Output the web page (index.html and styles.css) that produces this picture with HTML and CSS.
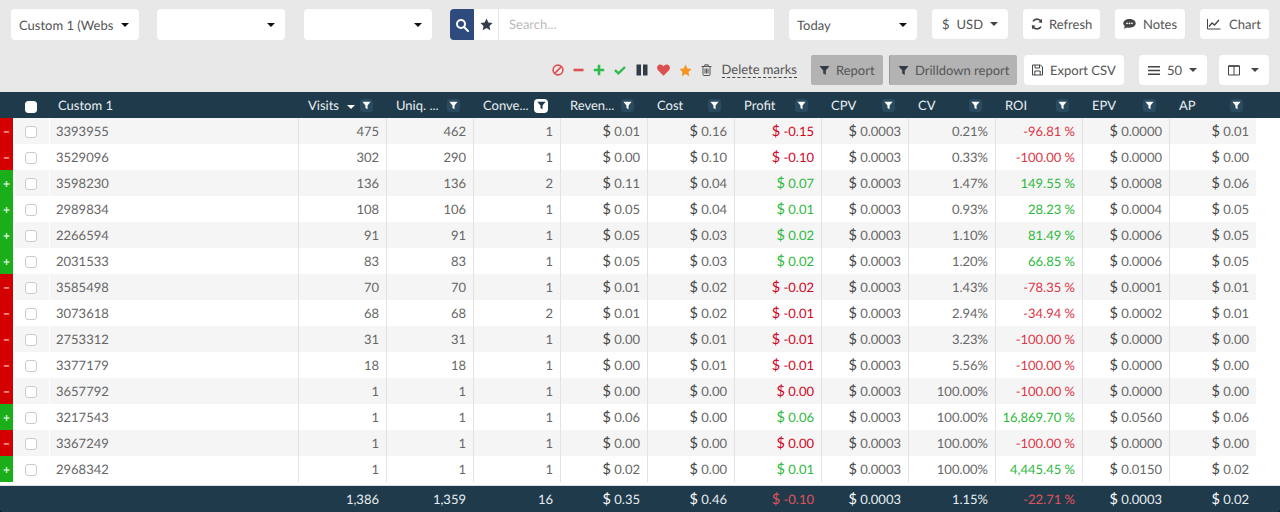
FILE: index.html
```html
<!DOCTYPE html>
<html lang="en">
<head>
  <meta charset="UTF-8">
  <title>Report</title>
  <link rel="stylesheet" href="styles.css">
</head>
<body>

<svg class="defs" width="0" height="0">
  <symbol id="funnel" viewBox="0 0 12 12"><path d="M.5 1h11L7.4 6v5L4.6 9.4V6z"/></symbol>
</svg>

<div class="toolbar">
  <div class="bar-row">
    <div class="select sel-first"><span class="sel-text">Custom 1 (Webs</span><i class="caret"></i></div>
    <div class="select sel-second"><i class="caret"></i></div>
    <div class="select sel-third"><i class="caret"></i></div>
    <div class="search">
      <div class="search-btn">
        <svg width="14" height="14" viewBox="0 0 14 14" fill="none" stroke="#fff" stroke-width="2"><circle cx="6" cy="6" r="4"/><path d="M9 9l4 4" stroke-linecap="round"/></svg>
      </div>
      <div class="search-star">
        <svg width="13" height="13" viewBox="0 0 24 24" fill="#333d47"><path d="M12 1l3.4 7.2 7.8 1-5.7 5.4 1.5 7.8L12 18.6l-7 3.8 1.5-7.8L.8 9.2l7.8-1z"/></svg>
      </div>
      <div class="search-input">Search...</div>
    </div>
    <div class="select sel-date"><span>Today</span><i class="caret"></i></div>
    <div class="btn btn-usd"><span class="dollar">$</span><span>USD</span><i class="caret caret-small"></i></div>
    <div class="btn btn-refresh">
      <svg width="12" height="12" viewBox="0 0 12 12" fill="none" stroke="#444" stroke-width="1.7"><path d="M10.6 4.6A4.8 4.8 0 0 0 2 3.4M1.4 7.4A4.8 4.8 0 0 0 10 8.6"/><path d="M11 .8v3.6H7.4M1 11.2V7.6h3.6" fill="#444" stroke="none"/></svg>
      Refresh
    </div>
    <div class="btn btn-notes">
      <svg width="13" height="12" viewBox="0 0 13 12"><path d="M6.5 1C3 1 .3 2.9.3 5.3c0 1.100.6 2.100 1.500 2.800L1 10.800l3-1.400c.8.200 1.600.3 2.500.3 3.500 0 6.200-1.900 6.200-4.400S10 1 6.500 1z" fill="#444"/><circle cx="4" cy="5.3" r=".9" fill="#fff"/><circle cx="6.5" cy="5.3" r=".9" fill="#fff"/><circle cx="9" cy="5.3" r=".9" fill="#fff"/></svg>
      Notes
    </div>
    <div class="btn btn-chart">
      <svg width="14" height="12" viewBox="0 0 14 12" fill="none" stroke="#444"><path d="M.5 1v10h13"/><path d="M2 8.500l3-3.500 2.500 2L12 2" stroke-width="1.3"/></svg>
      Chart
    </div>
  </div>

  <div class="bar-row bar-row-second">
    <div class="marks">
      <svg width="12" height="12" viewBox="0 0 12 12" fill="none" stroke="#dc5050" stroke-width="1.6"><circle cx="6" cy="6" r="4.9"/><path d="M2.600 9.400l6.800-6.800"/></svg>
      <svg width="11" height="12" viewBox="0 0 11 12"><path d="M.5 4.700h10v2.600H.5z" fill="#dc5050"/></svg>
      <svg width="12" height="12" viewBox="0 0 12 12"><path d="M4.700.8h2.600v3.900h3.900v2.600H7.300v3.900H4.700V7.300H.8V4.700h3.900z" fill="#2dbb4e"/></svg>
      <svg width="12" height="12" viewBox="0 0 12 12" fill="none" stroke="#2dbb4e" stroke-width="2.4"><path d="M1 6.200l3.400 3.200L11 3"/></svg>
      <svg class="mark-pause" width="12" height="12" viewBox="0 0 12 12"><path d="M.5.500h4.500v11H.5zM7 .500h4.500v11H7z" fill="#333d47"/></svg>
      <svg width="13" height="12" viewBox="0 0 13 12"><path d="M6.500 11.800L1 6.300C-.6 4.500 0 1.600 2 .8c1.700-.7 3.500 0 4.500 1.600C7.500.8 9.300.1 11 .8c2 .8 2.600 3.700 1 5.500z" fill="#dc5050"/></svg>
      <svg width="13" height="13" viewBox="0 0 24 24"><path d="M12 1l3.400 7.200 7.800 1-5.700 5.400 1.500 7.800L12 18.600l-7 3.800 1.500-7.800L.8 9.200l7.800-1z" fill="#f7931e"/></svg>
      <svg width="11" height="12" viewBox="0 0 11 12" fill="none" stroke="#555" stroke-width="1"><path d="M.5 2.500h10M2 2.500v8.200c0 .5.300.8.800.8h5.400c.5 0 .8-.3.800-.8V2.500M3.800 2.500V.8h3.400v1.700M4 4.500v5M5.500 4.500v5M7 4.500v5"/></svg>
      <span class="delete-marks">Delete marks</span>
    </div>
    <div class="btn btn-gray btn-report">
      <svg class="funnel-dark" width="11" height="11"><use href="#funnel"/></svg> Report
    </div>
    <div class="btn btn-gray btn-drill">
      <svg class="funnel-dark" width="11" height="11"><use href="#funnel"/></svg> Drilldown report
    </div>
    <div class="btn btn-export">
      <svg width="11" height="12" viewBox="0 0 11 12" fill="none" stroke="#444"><path d="M.5 1h8L10.500 3v8H.5zM3 1v3h4.500V1M2.800 11V7h5.400v4"/></svg>
      Export CSV
    </div>
    <div class="btn btn-count">
      <svg width="12" height="11" viewBox="0 0 12 11" fill="#444"><path d="M0 1h12v1.500H0zM0 4.700h12v1.500H0zM0 8.500h12V10H0z"/></svg>
      <span>50</span><i class="caret caret-small"></i>
    </div>
    <div class="btn btn-cols">
      <svg width="12" height="11" viewBox="0 0 12 11" fill="none" stroke="#444"><path d="M.5 1h11v9H.5zM6 1v9"/><path d="M.5 1h11" stroke-width="1.5"/></svg>
      <i class="caret caret-small"></i>
    </div>
  </div>
</div>

<table class="report">
  <colgroup>
    <col class="c-mark"><col class="c-check"><col class="c-name">
    <col class="c-first"><col class="c-num"><col class="c-num"><col class="c-num"><col class="c-num"><col class="c-num">
    <col class="c-num"><col class="c-num"><col class="c-num"><col class="c-num"><col class="c-num">
    <col class="c-rest">
  </colgroup>
  <thead>
    <tr>
      <th></th>
      <th class="th-check"><span class="check check-head"></span></th>
      <th class="th-name">Custom 1</th>
      <th><div class="th-in"><span>Visits</span><i class="sort"></i><span class="filter"><svg width="9" height="9"><use href="#funnel"/></svg></span></div></th>
      <th><div class="th-in"><span>Uniq. ...</span><span class="filter"><svg width="9" height="9"><use href="#funnel"/></svg></span></div></th>
      <th><div class="th-in"><span>Conve...</span><span class="filter filter-on"><svg width="9" height="9"><use href="#funnel"/></svg></span></div></th>
      <th><div class="th-in"><span>Reven...</span><span class="filter"><svg width="9" height="9"><use href="#funnel"/></svg></span></div></th>
      <th><div class="th-in"><span>Cost</span><span class="filter"><svg width="9" height="9"><use href="#funnel"/></svg></span></div></th>
      <th><div class="th-in"><span>Profit</span><span class="filter"><svg width="9" height="9"><use href="#funnel"/></svg></span></div></th>
      <th><div class="th-in"><span>CPV</span><span class="filter"><svg width="9" height="9"><use href="#funnel"/></svg></span></div></th>
      <th><div class="th-in"><span>CV</span><span class="filter"><svg width="9" height="9"><use href="#funnel"/></svg></span></div></th>
      <th><div class="th-in"><span>ROI</span><span class="filter"><svg width="9" height="9"><use href="#funnel"/></svg></span></div></th>
      <th><div class="th-in"><span>EPV</span><span class="filter"><svg width="9" height="9"><use href="#funnel"/></svg></span></div></th>
      <th><div class="th-in"><span>AP</span><span class="filter"><svg width="9" height="9"><use href="#funnel"/></svg></span></div></th>
      <th></th>
    </tr>
  </thead>
  <tbody>
    <tr><td class="mark minus">−</td><td class="cb"><span class="check"></span></td><td class="name">3393955</td><td>475</td><td>462</td><td>1</td><td><b>$</b> 0.01</td><td><b>$</b> 0.16</td><td class="loss"><b>$</b> -0.15</td><td><b>$</b> 0.0003</td><td>0.21%</td><td class="roi-bad">-96.81 %</td><td><b>$</b> 0.0000</td><td><b>$</b> 0.01</td><td class="rest"></td></tr>
    <tr><td class="mark minus">−</td><td class="cb"><span class="check"></span></td><td class="name">3529096</td><td>302</td><td>290</td><td>1</td><td><b>$</b> 0.00</td><td><b>$</b> 0.10</td><td class="loss"><b>$</b> -0.10</td><td><b>$</b> 0.0003</td><td>0.33%</td><td class="roi-bad">-100.00 %</td><td><b>$</b> 0.0000</td><td><b>$</b> 0.00</td><td class="rest"></td></tr>
    <tr><td class="mark plus">+</td><td class="cb"><span class="check"></span></td><td class="name">3598230</td><td>136</td><td>136</td><td>2</td><td><b>$</b> 0.11</td><td><b>$</b> 0.04</td><td class="gain"><b>$</b> 0.07</td><td><b>$</b> 0.0003</td><td>1.47%</td><td class="roi-good">149.55 %</td><td><b>$</b> 0.0008</td><td><b>$</b> 0.06</td><td class="rest"></td></tr>
    <tr><td class="mark plus">+</td><td class="cb"><span class="check"></span></td><td class="name">2989834</td><td>108</td><td>106</td><td>1</td><td><b>$</b> 0.05</td><td><b>$</b> 0.04</td><td class="gain"><b>$</b> 0.01</td><td><b>$</b> 0.0003</td><td>0.93%</td><td class="roi-good">28.23 %</td><td><b>$</b> 0.0004</td><td><b>$</b> 0.05</td><td class="rest"></td></tr>
    <tr><td class="mark plus">+</td><td class="cb"><span class="check"></span></td><td class="name">2266594</td><td>91</td><td>91</td><td>1</td><td><b>$</b> 0.05</td><td><b>$</b> 0.03</td><td class="gain"><b>$</b> 0.02</td><td><b>$</b> 0.0003</td><td>1.10%</td><td class="roi-good">81.49 %</td><td><b>$</b> 0.0006</td><td><b>$</b> 0.05</td><td class="rest"></td></tr>
    <tr><td class="mark plus">+</td><td class="cb"><span class="check"></span></td><td class="name">2031533</td><td>83</td><td>83</td><td>1</td><td><b>$</b> 0.05</td><td><b>$</b> 0.03</td><td class="gain"><b>$</b> 0.02</td><td><b>$</b> 0.0003</td><td>1.20%</td><td class="roi-good">66.85 %</td><td><b>$</b> 0.0006</td><td><b>$</b> 0.05</td><td class="rest"></td></tr>
    <tr><td class="mark minus">−</td><td class="cb"><span class="check"></span></td><td class="name">3585498</td><td>70</td><td>70</td><td>1</td><td><b>$</b> 0.01</td><td><b>$</b> 0.02</td><td class="loss"><b>$</b> -0.02</td><td><b>$</b> 0.0003</td><td>1.43%</td><td class="roi-bad">-78.35 %</td><td><b>$</b> 0.0001</td><td><b>$</b> 0.01</td><td class="rest"></td></tr>
    <tr><td class="mark minus">−</td><td class="cb"><span class="check"></span></td><td class="name">3073618</td><td>68</td><td>68</td><td>2</td><td><b>$</b> 0.01</td><td><b>$</b> 0.02</td><td class="loss"><b>$</b> -0.01</td><td><b>$</b> 0.0003</td><td>2.94%</td><td class="roi-bad">-34.94 %</td><td><b>$</b> 0.0002</td><td><b>$</b> 0.01</td><td class="rest"></td></tr>
    <tr><td class="mark minus">−</td><td class="cb"><span class="check"></span></td><td class="name">2753312</td><td>31</td><td>31</td><td>1</td><td><b>$</b> 0.00</td><td><b>$</b> 0.01</td><td class="loss"><b>$</b> -0.01</td><td><b>$</b> 0.0003</td><td>3.23%</td><td class="roi-bad">-100.00 %</td><td><b>$</b> 0.0000</td><td><b>$</b> 0.00</td><td class="rest"></td></tr>
    <tr><td class="mark minus">−</td><td class="cb"><span class="check"></span></td><td class="name">3377179</td><td>18</td><td>18</td><td>1</td><td><b>$</b> 0.00</td><td><b>$</b> 0.01</td><td class="loss"><b>$</b> -0.01</td><td><b>$</b> 0.0003</td><td>5.56%</td><td class="roi-bad">-100.00 %</td><td><b>$</b> 0.0000</td><td><b>$</b> 0.00</td><td class="rest"></td></tr>
    <tr><td class="mark minus">−</td><td class="cb"><span class="check"></span></td><td class="name">3657792</td><td>1</td><td>1</td><td>1</td><td><b>$</b> 0.00</td><td><b>$</b> 0.00</td><td class="loss"><b>$</b> 0.00</td><td><b>$</b> 0.0003</td><td>100.00%</td><td class="roi-bad">-100.00 %</td><td><b>$</b> 0.0000</td><td><b>$</b> 0.00</td><td class="rest"></td></tr>
    <tr><td class="mark plus">+</td><td class="cb"><span class="check"></span></td><td class="name">3217543</td><td>1</td><td>1</td><td>1</td><td><b>$</b> 0.06</td><td><b>$</b> 0.00</td><td class="gain"><b>$</b> 0.06</td><td><b>$</b> 0.0003</td><td>100.00%</td><td class="roi-good">16,869.70 %</td><td><b>$</b> 0.0560</td><td><b>$</b> 0.06</td><td class="rest"></td></tr>
    <tr><td class="mark minus">−</td><td class="cb"><span class="check"></span></td><td class="name">3367249</td><td>1</td><td>1</td><td>1</td><td><b>$</b> 0.00</td><td><b>$</b> 0.00</td><td class="loss"><b>$</b> 0.00</td><td><b>$</b> 0.0003</td><td>100.00%</td><td class="roi-bad">-100.00 %</td><td><b>$</b> 0.0000</td><td><b>$</b> 0.00</td><td class="rest"></td></tr>
    <tr><td class="mark plus">+</td><td class="cb"><span class="check"></span></td><td class="name">2968342</td><td>1</td><td>1</td><td>1</td><td><b>$</b> 0.02</td><td><b>$</b> 0.00</td><td class="gain"><b>$</b> 0.01</td><td><b>$</b> 0.0003</td><td>100.00%</td><td class="roi-good">4,445.45 %</td><td><b>$</b> 0.0150</td><td><b>$</b> 0.02</td><td class="rest"></td></tr>
  </tbody>
  <tfoot>
    <tr><td></td><td></td><td></td><td>1,386</td><td>1,359</td><td>16</td><td><b>$</b> 0.35</td><td><b>$</b> 0.46</td><td class="foot-bad"><b>$</b> -0.10</td><td><b>$</b> 0.0003</td><td>1.15%</td><td class="foot-bad">-22.71 %</td><td><b>$</b> 0.0003</td><td><b>$</b> 0.02</td><td></td></tr>
  </tfoot>
</table>

</body>
</html>
```

FILE: styles.css
```css
body {
  margin: 0;
  height: 512px;
  overflow: hidden;
  background-color: #e8e8e8;
  font-family: Lato, "Open Sans", sans-serif;
  font-size: 13px;
  color: #666;
  text-rendering: geometricPrecision;
}

.defs {
  display: block;
  height: 0;
}

.toolbar {
  height: 92px;
  box-sizing: border-box;
  padding: 9px 11px 0;
}

.bar-row {
  display: flex;
  align-items: flex-start;
}

.bar-row-second {
  justify-content: flex-end;
  margin-top: 15px;
}

/* selects */
.select {
  display: flex;
  flex: none;
  align-items: center;
  box-sizing: border-box;
  width: 128px;
  height: 31px;
  padding: 0 10px 0 8px;
  background: #fff;
  border-radius: 4px;
  color: #555;
}

.sel-second { margin-left: 18px; }
.sel-third { margin-left: 19px; }
.sel-date { margin-left: 15px; }

.sel-text {
  white-space: nowrap;
}

.caret {
  flex: none;
  width: 0;
  height: 0;
  margin-left: auto;
  border-left: 4.5px solid transparent;
  border-right: 4.5px solid transparent;
  border-top: 4.5px solid #111;
}

.caret-small {
  margin-left: 0;
  border-left-width: 4px;
  border-right-width: 4px;
  border-top: 4px solid #444;
}

/* search */
.search {
  display: flex;
  flex: none;
  width: 324px;
  height: 31px;
  margin-left: 18px;
}

.search-btn {
  display: flex;
  align-items: center;
  justify-content: center;
  width: 24px;
  background: #2f4a7d;
  border-radius: 4px 0 0 4px;
}

.search-star {
  display: flex;
  align-items: center;
  justify-content: center;
  width: 24px;
  background: #fff;
  border-right: 1px solid #e8e8e8;
}

.search-input {
  flex: 1;
  padding-left: 10px;
  background: #fff;
  color: #bbb;
  line-height: 31px;
}

/* buttons */
.btn {
  display: flex;
  flex: none;
  align-items: center;
  box-sizing: border-box;
  gap: 6px;
  height: 30px;
  margin-left: 15px;
  padding-left: 8px;
  background: #fff;
  border-radius: 4px;
  color: #555;
  white-space: nowrap;
}

.btn-usd { width: 76px; padding-left: 10px; gap: 7px; }
.btn-refresh { width: 77px; }
.btn-notes { width: 70px; gap: 7px; }
.btn-chart { width: 69px; padding-left: 7px; gap: 8px; }

.btn-gray {
  background: #b3b3b3;
  border-radius: 2px;
  color: #555;
}

.btn-report { width: 72px; margin-left: 14px; }
.btn-drill { width: 128px; margin-left: 6px; border-left: 1px solid #999; }
.btn-export { width: 100px; margin-left: 7px; gap: 7px; }
.btn-count { width: 68px; padding-left: 9px; gap: 7px; }
.btn-cols { width: 50px; margin-left: 12px; padding-left: 9px; gap: 11px; }

.funnel-dark { fill: #333d47; }

/* marks */
.marks {
  display: flex;
  align-items: center;
  gap: 9px;
  height: 30px;
}

.mark-pause { margin-left: 1px; }

.delete-marks {
  margin-left: 1px;
  border-bottom: 1px dashed #444;
  line-height: 15px;
  color: #555;
}

/* table */
.report {
  width: 1280px;
  border-collapse: separate;
  border-spacing: 0;
  table-layout: fixed;
  background: #111;
}

.c-mark { width: 13px; }
.c-check { width: 36px; }
.c-name { width: 249px; }
.c-first { width: 88px; }
.c-num { width: 87px; }
.c-rest { width: 24px; }

.report th {
  height: 26px;
  padding: 0;
  background: #1f3a4a;
  color: #e8eef2;
  font-weight: 400;
  text-align: left;
}

.report th.th-name { padding-left: 9px; }
.report th.th-check { padding-top: 3px; box-sizing: border-box; }

.th-in {
  display: flex;
  align-items: center;
  padding: 0 13px 0 10px;
}

.th-in span:first-child {
  flex: 1;
  white-space: nowrap;
}

.sort {
  width: 0;
  height: 0;
  margin-right: 5px;
  margin-top: 3px;
  border-left: 4px solid transparent;
  border-right: 4px solid transparent;
  border-top: 4px solid #fff;
}

.filter {
  display: flex;
  align-items: center;
  justify-content: center;
  width: 13px;
  height: 13px;
  margin-top: 1px;
  background: #2a4a60;
  border-radius: 3px;
  fill: #fff;
}

.filter-on {
  width: 14px;
  height: 14px;
  margin-right: -1px;
  background: #fff;
  border-radius: 4px;
  fill: #1f3a4a;
}

.report td {
  height: 26px;
  box-sizing: border-box;
  padding: 0 7px 1px 0;
  border-left: 1px solid #e2e2e2;
  background: #fff;
  text-align: right;
  white-space: nowrap;
}

.report tbody tr:nth-child(odd) td {
  background: #f5f5f5;
}

.report b {
  font-weight: 400;
  color: #444;
  font-size: 14.5px;
  line-height: 0;
}

.report td.mark {
  padding: 0;
  border: 0;
  color: #fff;
  text-align: center;
  font-size: 12px;
}

.report tbody tr td.minus { background: #d40000; }
.report tbody tr td.plus { background: #1aae1a; }

.report td.cb {
  padding: 2px 0 0 10px;
  border-left: 2px solid #fff;
  text-align: left;
}

.report td.name {
  padding: 0 0 1px 6px;
  border-left: 1px solid #fff;
  text-align: left;
}

.report tbody tr td.rest {
  border-left: 0;
  background: #fff;
}

.check {
  display: block;
  box-sizing: border-box;
  width: 12px;
  height: 12px;
  background: #fff;
  border: 1px solid #ccc;
  border-radius: 3px;
}

.check-head {
  margin-left: 12px;
  border-color: #fff;
}

.report td.loss, .report td.loss b { color: #d0021b; }
.report td.gain, .report td.gain b { color: #2db83d; }
.report td.roi-bad { color: #dc3545; }
.report td.roi-good { color: #2db83d; }

.report tfoot td {
  height: 30px;
  padding-top: 4px;
  border-left: 0;
  background: linear-gradient(#fff 3px, #d9dfe3 3px, #d9dfe3 4px, #1f3a4a 4px);
  color: #e8eef2;
}

.report tfoot td:first-child { border-bottom-left-radius: 3px; }
.report tfoot td:last-child { border-bottom-right-radius: 3px; }

.report tfoot b { color: #fff; }
.report tfoot td.foot-bad, .report tfoot td.foot-bad b { color: #e0525c; }
```
